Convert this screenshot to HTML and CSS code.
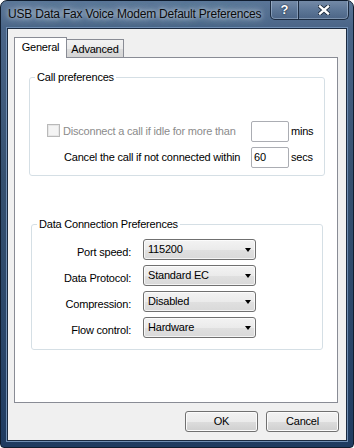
FILE: index.html
```html
<!DOCTYPE html>
<html>
<head>
<meta charset="utf-8">
<link rel="stylesheet" href="styles.css">
</head>
<body>
<div class="window">
  <div class="titlebar">
    <span class="title">USB Data Fax Voice Modem Default Preferences</span>
    <div class="caption-btns">
      <span class="cbtn help">?</span>
      <span class="cbtn close">
        <svg width="12" height="10" viewBox="0 0 12 10">
          <path d="M2 1.5 L10 8.5 M10 1.5 L2 8.5" stroke="#1c2a3c" stroke-width="4.2" stroke-linecap="round"/>
          <path d="M2 1.5 L10 8.5 M10 1.5 L2 8.5" stroke="#ffffff" stroke-width="2.4" stroke-linecap="square"/>
        </svg>
      </span>
    </div>
  </div>
  <div class="client">
    <div class="tabs">
      <span class="tab active">General</span>
      <span class="tab">Advanced</span>
    </div>
    <div class="panel">
      <fieldset class="group call">
        <legend>Call preferences</legend>
        <div class="call-grid">
          <label class="chk disabled"><span class="box"></span>Disconnect a call if idle for more than</label>
          <span class="field"></span>
          <span class="unit">mins</span>
          <span class="lbl2">Cancel the call if not connected within</span>
          <span class="field">60</span>
          <span class="unit">secs</span>
        </div>
      </fieldset>
      <fieldset class="group data">
        <legend>Data Connection Preferences</legend>
        <div class="data-grid">
          <span class="lbl">Port speed:</span>
          <span class="combo"><span>115200</span><span class="arrow"></span></span>
          <span class="lbl">Data Protocol:</span>
          <span class="combo"><span>Standard EC</span><span class="arrow"></span></span>
          <span class="lbl">Compression:</span>
          <span class="combo"><span>Disabled</span><span class="arrow"></span></span>
          <span class="lbl">Flow control:</span>
          <span class="combo"><span>Hardware</span><span class="arrow"></span></span>
        </div>
      </fieldset>
    </div>
    <div class="buttons">
      <button class="btn">OK</button>
      <button class="btn">Cancel</button>
    </div>
  </div>
</div>
</body>
</html>
```
FILE: styles.css
```css
* { box-sizing: border-box; }
html, body { margin: 0; padding: 0; background: #ffffff; }
body { font-family: "Liberation Sans", Arial, sans-serif; font-size: 11px; letter-spacing: -0.2px; color: #000; }

.window {
  width: 354px;
  height: 448px;
  border: 1px solid #0f1c2e;
  border-radius: 7px 7px 4px 4px;
  background: linear-gradient(180deg, #5b7597 0%, #4a6588 6%, #35506f 40%, #2a4669 75%, #1f3b60 100%);
  display: flex;
  flex-direction: column;
  padding: 0 6px 6px 6px;
  overflow: hidden;
}

.titlebar {
  height: 27px;
  display: flex;
  align-items: flex-start;
  flex: none;
}
.title {
  margin-top: 6px;
  padding-left: 1px;
  font-size: 12px;
  line-height: 15px;
  letter-spacing: -0.2px;
  color: #0b0b0b;
  white-space: nowrap;
  text-shadow: 0 0 4px rgba(220,230,240,0.9), 0 0 8px rgba(200,215,230,0.8), 0 0 12px rgba(200,215,230,0.6);
}
.caption-btns {
  margin: -1px -2px 0 auto;
  height: 20px;
  display: flex;
  border: 1px solid #1c2b40;
  border-top: 0;
  border-radius: 0 0 5px 5px;
  overflow: hidden;
  box-shadow: inset 0 0 0 1px rgba(170,190,215,0.55);
}
.cbtn {
  display: flex;
  align-items: center;
  justify-content: center;
  height: 100%;
  background: linear-gradient(180deg, rgba(255,255,255,0.16), rgba(255,255,255,0.04) 55%, rgba(0,0,0,0.05));
}
.help {
  width: 28px;
  border-right: 1px solid #1c2b40;
  box-shadow: inset -1px 0 0 rgba(170,190,215,0.55);
  color: #fff;
  font-weight: bold;
  font-size: 13px;
  line-height: 13px;
  letter-spacing: 0;
  text-shadow: 0 0 2px #15243a, 0 0 1px #15243a;
  padding-bottom: 1px;
}
.close { width: 49px; }
.close svg { display: block; }

.client {
  flex: 1;
  border: 1px solid #1a2a40;
  box-shadow: 0 0 0 1px #6f8db2;
  background: #f0f0f0;
  display: flex;
  flex-direction: column;
  padding: 8px 8px 0 6px;
}

.tabs {
  height: 20px;
  display: flex;
  align-items: flex-end;
  position: relative;
  z-index: 1;
  flex: none;
}
.tab {
  height: 18px;
  width: 57px;
  border: 1px solid #898c95;
  border-bottom: 0;
  border-left: 0;
  background: linear-gradient(180deg, #f2f2f2 0%, #ebebeb 50%, #dddddd 51%, #d5d5d5 100%);
  text-align: center;
  line-height: 14px;
  padding-top: 2px;
}
.tab.active {
  height: 21px;
  width: 53px;
  margin-bottom: -1px;
  border-left: 1px solid #898c95;
  background: #ffffff;
}

.panel {
  height: 346px;
  border: 1px solid #898c95;
  background: #ffffff;
  flex: none;
  display: flex;
  flex-direction: column;
}

.group {
  border: 1px solid #d5dfe5;
  border-radius: 3px;
  padding: 0;
  min-inline-size: 0;
}
.group legend {
  margin-left: 5px;
  padding: 0 2px;
  line-height: 14px;
  font-size: 11px;
}
.call {
  margin: 12px 12px 0 14px;
  padding-bottom: 7px;
}
.data {
  margin: 41px 14px 0 16px;
  padding-bottom: 11px;
}

.call-grid {
  display: grid;
  grid-template-columns: 204px 38px auto;
  grid-auto-rows: 21px;
  row-gap: 5px;
  padding: 37px 0 0 17px;
  line-height: 21px;
}
.chk {
  display: flex;
  align-items: center;
  white-space: nowrap;
}
.chk.disabled { color: #8b8b8b; }
.box {
  width: 13px;
  height: 13px;
  margin: 0 3px 3px 0;
  border: 1px solid #b9b9b9;
  background: #f4f4f4;
  box-shadow: inset 0 0 0 1px #e6e6e6;
  flex: none;
}
.lbl2 {
  padding-left: 17px;
  white-space: nowrap;
}
.field {
  border: 1px solid #abadb3;
  border-radius: 2px;
  background: #fff;
  line-height: 19px;
  padding-left: 2px;
}
.unit { padding-left: 2px; }

.data-grid {
  display: grid;
  grid-template-columns: 99px 113px;
  grid-auto-rows: 21px;
  column-gap: 12px;
  row-gap: 5px;
  padding-top: 8px;
}
.lbl {
  text-align: right;
  line-height: 21px;
  padding-top: 3px;
  white-space: nowrap;
}
.combo {
  display: flex;
  align-items: center;
  justify-content: space-between;
  border: 1px solid #707070;
  border-radius: 3px;
  background: linear-gradient(180deg, #f3f3f3 0%, #ebebeb 50%, #e0e0e0 51%, #d9d9d9 100%);
  box-shadow: inset 0 0 0 1px rgba(255,255,255,0.7);
  line-height: 19px;
  padding: 0 4px 0 4px;
}
.arrow {
  width: 0;
  height: 0;
  border-left: 3.5px solid transparent;
  border-right: 3.5px solid transparent;
  border-top: 4px solid #000;
}

.buttons {
  display: flex;
  justify-content: flex-end;
  gap: 8px;
  margin-top: 8px;
  margin-right: -1px;
}
.btn {
  width: 73px;
  height: 21px;
  margin: 0;
  padding: 0;
  font-family: "Liberation Sans", Arial, sans-serif;
  font-size: 11px;
  letter-spacing: -0.2px;
  line-height: 19px;
  color: #000;
  border: 1px solid #707070;
  border-radius: 3px;
  background: linear-gradient(180deg, #f2f2f2 0%, #ebebeb 50%, #dddddd 51%, #cfcfcf 100%);
  box-shadow: inset 0 0 0 1px #fbfbfb;
}
```
